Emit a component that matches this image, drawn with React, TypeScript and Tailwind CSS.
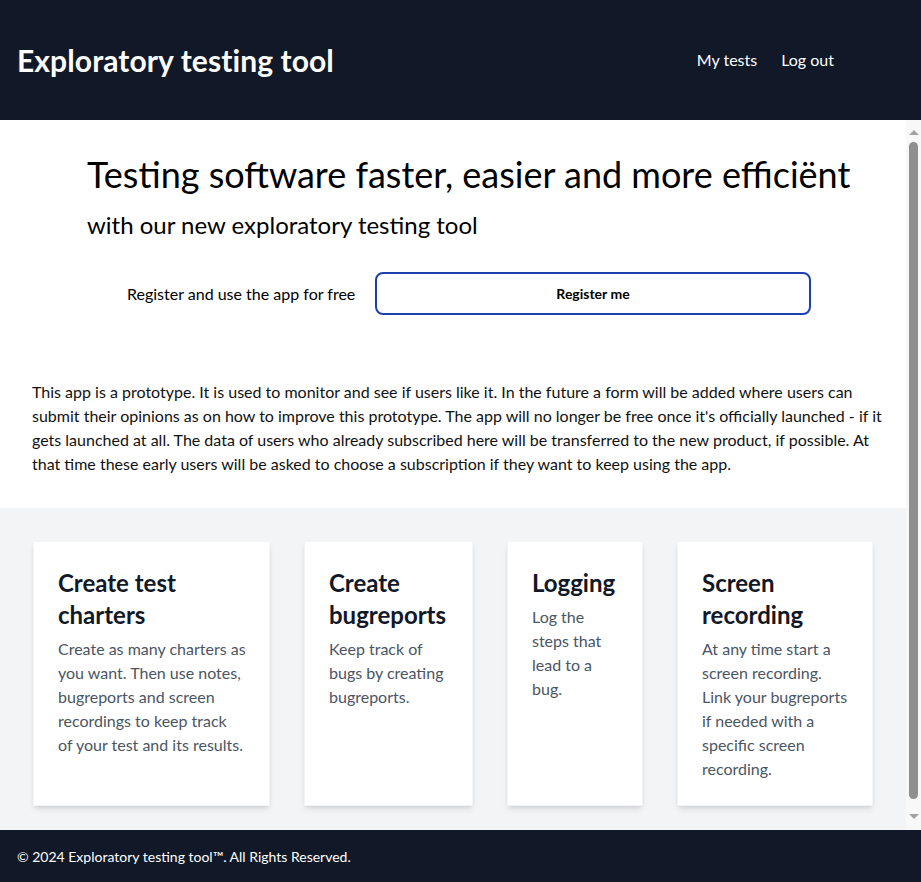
import React from "react";

const cards = [
  {
    w: "w-[237px]",
    title: ["Create test", "charters"],
    body: [
      "Create as many charters as",
      "you want. Then use notes,",
      "bugreports and screen",
      "recordings to keep track",
      "of your test and its results.",
    ],
  },
  {
    w: "w-[169px]",
    title: ["Create", "bugreports"],
    body: ["Keep track of", "bugs by creating", "bugreports."],
  },
  {
    w: "w-[136px]",
    title: ["Logging"],
    body: ["Log the", "steps that", "lead to a", "bug."],
  },
  {
    w: "w-[196px]",
    title: ["Screen", "recording"],
    body: [
      "At any time start a",
      "screen recording.",
      "Link your bugreports",
      "if needed with a",
      "specific screen",
      "recording.",
    ],
  },
];

const para = [
  "This app is a prototype. It is used to monitor and see if users like it. In the future a form will be added where users can",
  "submit their opinions as on how to improve this prototype. The app will no longer be free once it's officially launched - if it",
  "gets launched at all. The data of users who already subscribed here will be transferred to the new product, if possible. At",
  "that time these early users will be asked to choose a subscription if they want to keep using the app.",
];

export default function App() {
  return (
    <div
      className="h-[882px] w-[921px] flex flex-col bg-white text-black"
      style={{ fontFamily: "Lato, 'Open Sans', sans-serif" }}
    >
      <header className="h-[120px] shrink-0 bg-[#111827] flex items-center justify-between pl-[17px] pr-[87px]">
        <h1 className="text-[30px] leading-[36px] font-bold text-white tracking-[0.1px]">Exploratory testing tool</h1>
        <nav className="flex items-center gap-[24px] text-[16px] text-white">
          <a>My tests</a>
          <a>Log out</a>
        </nav>
      </header>

      <div className="flex-1 flex min-h-0">
        <main className="flex-1 overflow-hidden">
          <section className="bg-white">
            <h2 className="pl-[87px] pt-[34px] text-[36px] leading-[40px] font-normal">
              Testing software faster, easier and more efficiënt
            </h2>
            <h3 className="pl-[87px] mt-[15px] text-[24px] leading-[32px] font-normal">
              with our new exploratory testing tool
            </h3>
            <div className="mt-[31px] pl-[127px] flex items-center gap-[17px]">
              <span className="w-[231px] text-[16px] whitespace-nowrap">Register and use the app for free</span>
              <button className="w-[436px] h-[43px] rounded-lg border-2 border-[#1e40af] bg-white text-[14px] font-bold text-black">
                Register me
              </button>
            </div>
            <div className="mt-[65px] px-[32px] pb-[32px] text-[16px] leading-[24px] text-[#111]">
              {para.map((l, i) => (
                <div key={i} className="whitespace-nowrap">{l}</div>
              ))}
            </div>
          </section>

          <section className="bg-[#f3f4f6] pt-[33px] pb-[48px] px-[33px] flex gap-[34px]">
            {cards.map((c, i) => (
              <div
                key={i}
                className={`${c.w} shrink-0 bg-white border border-gray-100 shadow-md px-[24px] pt-[25px] pb-[24px]`}
              >
                <h4 className="text-[24px] leading-[32px] font-bold text-[#111827]">
                  {c.title.map((t, j) => (
                    <div key={j} className="whitespace-nowrap">{t}</div>
                  ))}
                </h4>
                <p className="mt-[6px] text-[16px] leading-[24px] text-[#4b5563]">
                  {c.body.map((t, j) => (
                    <span key={j} className="block whitespace-nowrap">{t}</span>
                  ))}
                </p>
              </div>
            ))}
          </section>
        </main>

        <div className="w-[15px] shrink-0 bg-[#f8f8f8] flex flex-col items-center">
          <svg width="10" height="5" viewBox="0 0 10 5" className="mt-[10px]">
            <path d="M0 5 L5 0 L10 5 Z" fill="#a3a3a3" />
          </svg>
          <div className="mt-[7px] w-[9px] h-[657px] rounded-[5px] bg-[#8f8f8f]" />
          <svg width="10" height="5" viewBox="0 0 10 5" className="mt-[15px]">
            <path d="M0 0 L10 0 L5 5 Z" fill="#a3a3a3" />
          </svg>
        </div>
      </div>

      <footer className="h-[52px] shrink-0 bg-[#111827] flex items-center pl-[17px]">
        <p className="text-[14px] text-white">© 2024 Exploratory testing tool™. All Rights Reserved.</p>
      </footer>
    </div>
  );
}
